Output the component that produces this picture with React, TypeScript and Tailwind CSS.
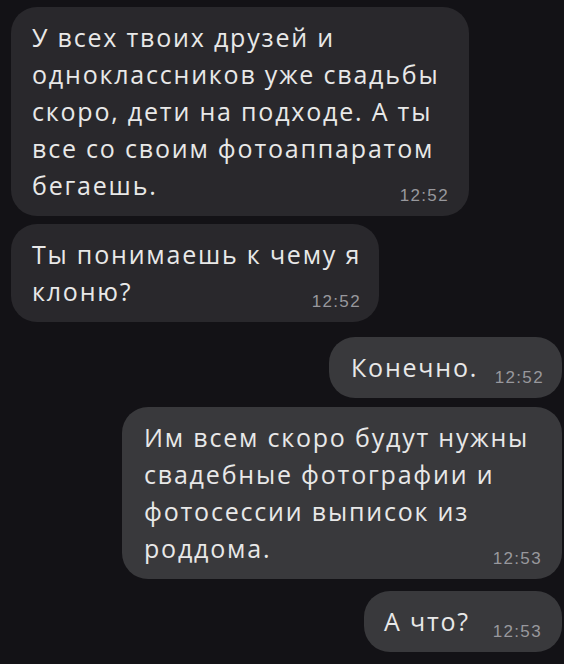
type Msg = {
  lines: string[];
  time: string;
  out: boolean;
  box: string;
};

const messages: Msg[] = [
  {
    lines: [
      "У всех твоих друзей и",
      "одноклассников уже свадьбы",
      "скоро, дети на подходе. А ты",
      "все со своим фотоаппаратом",
      "бегаешь.",
    ],
    time: "12:52",
    out: false,
    box: "w-[458px] pl-[21px] pr-[20px] mt-[7px]",
  },
  {
    lines: ["Ты понимаешь к чему я", "клоню?"],
    time: "12:52",
    out: false,
    box: "w-[368px] pl-[21px] pr-[18px] mt-[8px]",
  },
  {
    lines: ["Конечно."],
    time: "12:52",
    out: true,
    box: "w-[233px] pl-[22px] pr-[18px] mt-[15px]",
  },
  {
    lines: [
      "Им всем скоро будут нужны",
      "свадебные фотографии и",
      "фотосессии выписок из",
      "роддома.",
    ],
    time: "12:53",
    out: true,
    box: "w-[440px] pl-[22px] pr-[20px] mt-[9px]",
  },
  {
    lines: ["А что?"],
    time: "12:53",
    out: true,
    box: "w-[198px] pl-[20px] pr-[20px] mt-[12px]",
  },
];

function Bubble({ msg }: { msg: Msg }) {
  const head = msg.lines.slice(0, -1);
  const last = msg.lines[msg.lines.length - 1];

  return (
    <div
      className={`${msg.box} ${
        msg.out ? "self-end bg-[#39393c]" : "self-start bg-[#29282c]"
      } rounded-[26px] py-[12px] flex flex-col`}
    >
      {head.map((line) => (
        <div key={line} className="whitespace-nowrap">
          {line}
        </div>
      ))}
      <div className="flex justify-between items-end whitespace-nowrap">
        <span>{last}</span>
        <span
          className="text-[17px] leading-none tracking-[0.08em] text-[#98989d] ml-2"
          style={{ fontFamily: '"Liberation Sans", Arial, sans-serif' }}
        >
          {msg.time}
        </span>
      </div>
    </div>
  );
}

export default function App() {
  return (
    <div
      className="w-[564px] h-[664px] bg-[#131216] overflow-hidden flex flex-col pl-[11px] pr-[2px] text-[25px] leading-[37px] tracking-[1.8px] text-[#e8e8e8]"
      style={{ fontFamily: '"Open Sans", "Liberation Sans", sans-serif' }}
    >
      {messages.map((msg, i) => (
        <Bubble key={i} msg={msg} />
      ))}
    </div>
  );
}
